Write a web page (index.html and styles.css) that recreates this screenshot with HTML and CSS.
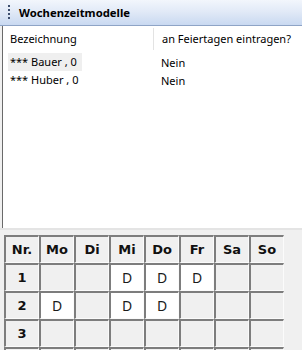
FILE: index.html
```html
<!DOCTYPE html>
<html lang="de">
<head>
  <meta charset="UTF-8">
  <title>Wochenzeitmodelle</title>
  <link rel="stylesheet" href="styles.css">
</head>
<body>
<div class="window">
  <div class="titlebar">
    <span class="grip"></span>
    <span class="title">Wochenzeitmodelle</span>
  </div>

  <div class="list">
    <div class="list-head">
      <div class="col-name">Bezeichnung</div>
      <div class="col-holiday">an Feiertagen eintragen?</div>
    </div>
    <div class="list-row">
      <div class="col-name"><span class="selected">*** Bauer , 0</span></div>
      <div class="col-holiday">Nein</div>
    </div>
    <div class="list-row">
      <div class="col-name"><span>*** Huber , 0</span></div>
      <div class="col-holiday">Nein</div>
    </div>
  </div>

  <div class="grid-area">
    <table class="week">
      <tr>
        <th>Nr.</th><th>Mo</th><th>Di</th><th>Mi</th><th>Do</th><th>Fr</th><th>Sa</th><th>So</th>
      </tr>
      <tr>
        <th>1</th><td></td><td></td><td class="on">D</td><td class="on">D</td><td class="on">D</td><td></td><td></td>
      </tr>
      <tr>
        <th>2</th><td class="on">D</td><td></td><td class="on">D</td><td class="on">D</td><td></td><td></td><td></td>
      </tr>
      <tr>
        <th>3</th><td></td><td></td><td></td><td></td><td></td><td></td><td></td>
      </tr>
      <tr>
        <th></th><td></td><td></td><td></td><td></td><td></td><td></td><td></td>
      </tr>
    </table>
  </div>
</div>
</body>
</html>
```

FILE: styles.css
```css
* {
  margin: 0;
  padding: 0;
  box-sizing: border-box;
}

body {
  width: 302px;
  height: 350px;
  overflow: hidden;
  font-family: "Noto Sans", "Liberation Sans", sans-serif;
  font-size: 11px;
  color: #000;
  background: #f0f0f0;
}

.window {
  width: 302px;
  height: 350px;
  display: flex;
  flex-direction: column;
  overflow: hidden;
}

.titlebar {
  height: 26px;
  flex: none;
  display: flex;
  align-items: center;
  gap: 9px;
  padding-left: 8px;
  background: linear-gradient(#f2f6fc, #e2eaf7 45%, #c9d9f1);
  border-bottom: 1px solid #8ea4c6;
}

.grip {
  width: 2px;
  height: 15px;
  background: repeating-linear-gradient(#3c4e6e 0 2px, transparent 2px 4px);
}

.title {
  font-weight: bold;
  font-size: 11.3px;
}

.list {
  flex: none;
  height: 202px;
  margin-left: 2px;
  background: #fff;
  border-left: 1px solid #6a6a6a;
}

.list-head,
.list-row {
  display: flex;
  white-space: nowrap;
}

.list-head {
  height: 27px;
  padding-top: 2px;
  align-items: flex-start;
  line-height: 22px;
}

.list-row {
  height: 18px;
  align-items: center;
}

.col-name {
  width: 150px;
  flex: none;
  padding-left: 7px;
}

.col-holiday {
  flex: 1;
  padding-left: 8px;
}

.list-head .col-holiday {
  border-left: 1px solid #e3e3e3;
  height: 22px;
}

.list-row .col-name {
  padding-left: 5px;
}

.list-row span {
  display: inline-block;
  padding: 0 5px 0 2px;
  line-height: 18px;
}

.list-row span.selected {
  background: #efefef;
}

.grid-area {
  flex: 1;
  border-top: 2px solid #e4e4e4;
  padding: 5px 0 0 4px;
  background: #f0f0f0;
}

.week {
  border-collapse: separate;
  border-spacing: 0;
}

.week th,
.week td {
  width: 35px;
  height: 28px;
  border-top: 2px solid #7d7d7d;
  border-left: 2px solid #7d7d7d;
  border-right: 1px solid #fbfbfb;
  border-bottom: 1px solid #fbfbfb;
  background: #f0f0f0;
  text-align: center;
  vertical-align: middle;
  padding: 0;
}

.week th {
  font-family: "DejaVu Sans", sans-serif;
  font-size: 13px;
  font-weight: bold;
  color: #111;
}

.week td {
  font-size: 14px;
  color: #1b1b1b;
}

.week td.on {
  background: #fff;
}
```
